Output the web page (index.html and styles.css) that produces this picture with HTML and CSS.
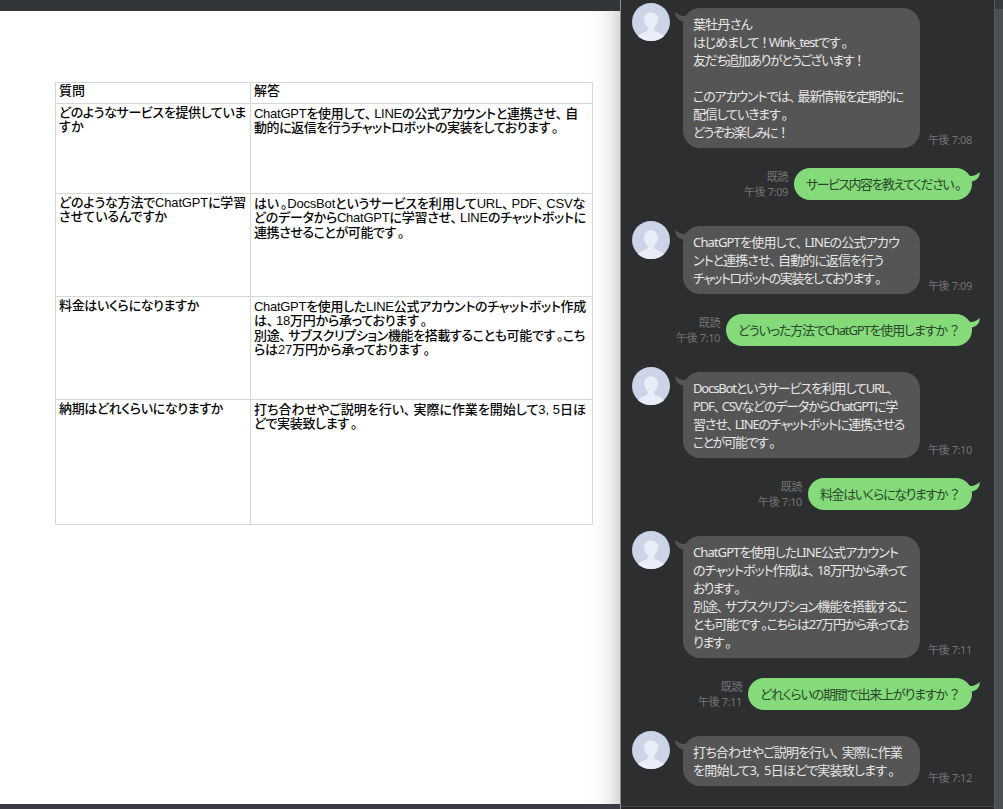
FILE: index.html
```html
<!DOCTYPE html>
<html lang="ja">
<head>
  <meta charset="UTF-8">
  <meta name="viewport" content="width=device-width, initial-scale=1.0">
  <title>ChatGPT × LINE</title>
  <link rel="stylesheet" href="styles.css">
</head>
<body>
  <svg class="defs" width="0" height="0">
    <symbol id="avatar" viewBox="0 0 38 38">
      <circle cx="19" cy="19" r="19" fill="#cdd4e8"/>
      <path d="M19 9.200c-4 0-6.900 3-6.900 7.200 0 3.500 1.500 6.200 3.700 7.900v2.200c0 1.200-1.200 1.800-3 2.500-2.800 1-5.300 2.300-6.900 4.200A19 19 0 0 0 19 38a19 19 0 0 0 13.100-4.800c-1.600-1.900-4.100-3.200-6.900-4.200-1.800-.7-3-1.300-3-2.500v-2.200c2.200-1.700 3.700-4.400 3.700-7.900 0-4.200-2.900-7.200-6.900-7.200z" fill="#e9edf7"/>
    </symbol>
    <symbol id="tail" viewBox="0 0 18 14">
      <path d="M0 1L5 3.200C9 4.800 14 3.800 17.600 0C18.300 5 14.500 8.400 9.500 9.600L4 14Z"/>
    </symbol>
  </svg>

  <div class="screen">
    <main class="doc">
      <div class="paper">
        <table class="faq">
          <tr class="head">
            <td><span class="line" data-width="26">質問</span></td>
            <td><span class="line" data-width="26">解答</span></td>
          </tr>
          <tr class="r1">
            <td><span class="line" data-width="187">どのようなサービスを提供していま</span><span class="line" data-width="25">すか</span></td>
            <td><span class="line" data-width="324">ChatGPTを使用して、LINEの公式アカウントと連携させ、自</span><span class="line" data-width="304">動的に返信を行うチャットロボットの実装をしております。</span></td>
          </tr>
          <tr class="r2">
            <td><span class="line" data-width="187">どのような方法でChatGPTに学習</span><span class="line" data-width="108">させているんですか</span></td>
            <td><span class="line" data-width="331">はい。DocsBotというサービスを利用してURL、PDF、CSVな</span><span class="line" data-width="332">どのデータからChatGPTに学習させ、LINEのチャットボットに</span><span class="line" data-width="150">連携させることが可能です。</span></td>
          </tr>
          <tr class="r3">
            <td><span class="line" data-width="140">料金はいくらになりますか</span></td>
            <td><span class="line" data-width="332">ChatGPTを使用したLINE公式アカウントのチャットボット作成</span><span class="line" data-width="173">は、18万円から承っております。</span><span class="line" data-width="331">別途、サブスクリプション機能を搭載することも可能です。こち</span><span class="line" data-width="176">らは27万円から承っております。</span></td>
          </tr>
          <tr class="r4">
            <td><span class="line" data-width="164">納期はどれくらいになりますか</span></td>
            <td><span class="line" data-width="332">打ち合わせやご説明を行い、実際に作業を開始して3, 5日ほ</span><span class="line" data-width="103">どで実装致します。</span></td>
          </tr>
        </table>
      </div>
    </main>

    <section class="chat">
      <div class="msg bot">
        <svg class="avatar"><use href="#avatar"/></svg>
        <div class="bubble">
          <svg class="tail"><use href="#tail"/></svg>
          <span class="line" data-width="59">葉牡丹さん</span>
          <span class="line" data-width="154">はじめまして！Wink_testです。</span>
          <span class="line" data-width="170">友だち追加ありがとうございます！</span>
          <span class="line">&nbsp;</span>
          <span class="line" data-width="210">このアカウントでは、最新情報を定期的に</span>
          <span class="line" data-width="94">配信していきます。</span>
          <span class="line" data-width="94">どうぞお楽しみに！</span>
        </div>
        <div class="meta"><span>午後 7:08</span></div>
      </div>

      <div class="msg user">
        <div class="meta"><span>既読</span><span>午後 7:09</span></div>
        <div class="bubble">
          <svg class="tail"><use href="#tail"/></svg>
          <span class="line" data-width="154">サービス内容を教えてください。</span>
        </div>
      </div>

      <div class="msg bot">
        <svg class="avatar"><use href="#avatar"/></svg>
        <div class="bubble">
          <svg class="tail"><use href="#tail"/></svg>
          <span class="line" data-width="206">ChatGPTを使用して、LINEの公式アカウ</span>
          <span class="line" data-width="190">ントと連携させ、自動的に返信を行う</span>
          <span class="line" data-width="187">チャットロボットの実装をしております。</span>
        </div>
        <div class="meta"><span>午後 7:09</span></div>
      </div>

      <div class="msg user">
        <div class="meta"><span>既読</span><span>午後 7:10</span></div>
        <div class="bubble">
          <svg class="tail"><use href="#tail"/></svg>
          <span class="line" data-width="222">どういった方法でChatGPTを使用しますか？</span>
        </div>
      </div>

      <div class="msg bot">
        <svg class="avatar"><use href="#avatar"/></svg>
        <div class="bubble">
          <svg class="tail"><use href="#tail"/></svg>
          <span class="line" data-width="202">DocsBotというサービスを利用してURL、</span>
          <span class="line" data-width="204">PDF、CSVなどのデータからChatGPTに学</span>
          <span class="line" data-width="211">習させ、LINEのチャットボットに連携させる</span>
          <span class="line" data-width="81">ことが可能です。</span>
        </div>
        <div class="meta"><span>午後 7:10</span></div>
      </div>

      <div class="msg user">
        <div class="meta"><span>既読</span><span>午後 7:10</span></div>
        <div class="bubble">
          <svg class="tail"><use href="#tail"/></svg>
          <span class="line" data-width="140">料金はいくらになりますか？</span>
        </div>
      </div>

      <div class="msg bot">
        <svg class="avatar"><use href="#avatar"/></svg>
        <div class="bubble">
          <svg class="tail"><use href="#tail"/></svg>
          <span class="line" data-width="205">ChatGPTを使用したLINE公式アカウント</span>
          <span class="line" data-width="214">のチャットボット作成は、18万円から承って</span>
          <span class="line" data-width="46">おります。</span>
          <span class="line" data-width="214">別途、サブスクリプション機能を搭載するこ</span>
          <span class="line" data-width="215">とも可能です。こちらは27万円から承ってお</span>
          <span class="line" data-width="37">ります。</span>
        </div>
        <div class="meta"><span>午後 7:11</span></div>
      </div>

      <div class="msg user">
        <div class="meta"><span>既読</span><span>午後 7:11</span></div>
        <div class="bubble">
          <svg class="tail"><use href="#tail"/></svg>
          <span class="line" data-width="200">どれくらいの期間で出来上がりますか？</span>
        </div>
      </div>

      <div class="msg bot">
        <svg class="avatar"><use href="#avatar"/></svg>
        <div class="bubble">
          <svg class="tail"><use href="#tail"/></svg>
          <span class="line" data-width="209">打ち合わせやご説明を行い、実際に作業</span>
          <span class="line" data-width="201">を開始して3,&nbsp; 5日ほどで実装致します。</span>
        </div>
        <div class="meta"><span>午後 7:12</span></div>
      </div>
    </section>

    <aside class="edge"></aside>
  </div>

  <script src="script.js"></script>
</body>
</html>
```

FILE: styles.css
```css
* {
  box-sizing: border-box;
}

body {
  margin: 0;
  background: #323639;
  overflow: hidden;
}

.defs {
  display: block;
}

.screen {
  display: flex;
  width: 1003px;
  height: 809px;
}

.line {
  display: block;
  width: max-content;
  white-space: nowrap;
  font-feature-settings: "palt";
}

/* punctuation keeps part of its full-width space */
.comma {
  margin-right: 3px;
}

.stop {
  margin-left: 2px;
}

.mark {
  margin: 0 2px 0 3px;
}

/* document */
.doc {
  width: 620px;
  padding: 11px 0 5px;
  background: linear-gradient(#323639 0 50%, #3b3c43 50%);
}

.paper {
  height: 793px;
  padding: 71px 0 0 55px;
  background: linear-gradient(to right, #fff 585px, #fbfbfb 598px, #efefef 610px, #d6d6d6 620px);
}

.faq {
  width: 538px;
  border-collapse: collapse;
  table-layout: fixed;
  font-family: "Liberation Sans", "Noto Sans CJK JP", sans-serif;
  font-size: 13px;
  font-weight: 500;
  line-height: 14.3px;
  color: #080808;
}

.faq td {
  padding: 3px 3px 0;
  border: 1px solid #d5d8d8;
  vertical-align: top;
}

.faq td:first-child {
  width: 195px;
  padding-top: 2px;
  line-height: 13.5px;
}

.head {
  height: 21px;
}

.faq .head td {
  padding-top: 1px;
  line-height: 14px;
}

.r1 {
  height: 90px;
}

.r2,
.r3 {
  height: 103px;
}

.r4 {
  height: 125px;
}

/* chat */
.chat {
  width: 375px;
  padding: 3px 22px 0 10px;
  background: linear-gradient(#2c2e30 806px, #44464a 806px 807px, #2a2628 807px);
  border-left: 1px solid #8b8d8e;
  border-right: 1px solid #54585a;
  font-family: "Noto Sans", "Noto Sans CJK JP", sans-serif;
  font-size: 13px;
  line-height: 18px;
}

.msg {
  display: flex;
}

.bot {
  align-items: flex-start;
  margin-left: 1px;
  margin-bottom: 20px;
}

.user {
  justify-content: flex-end;
  align-items: center;
  gap: 6px;
  margin-bottom: 21px;
}

.avatar {
  flex: none;
  width: 38px;
  height: 38px;
}

.bubble {
  position: relative;
  flex: none;
}

.bot .bubble {
  width: 237px;
  margin: 5px 8px 0 13px;
  padding: 7px 10px;
  border-radius: 17px;
  background: #555;
  color: #e6e6e6;
}

.user .bubble {
  padding: 7px 12px;
  border-radius: 16px;
  background: #85db79;
  color: #2a472c;
}

.tail {
  position: absolute;
  top: 4px;
  width: 18px;
  height: 14px;
}

.bot .tail {
  left: -8px;
  fill: #555;
  transform: scaleX(-1);
}

.user .tail {
  right: -8px;
  fill: #85db79;
}

.meta {
  display: flex;
  flex-direction: column;
  font-size: 11px;
  line-height: 15px;
  letter-spacing: -0.4px;
  color: #727476;
  white-space: nowrap;
}

.bot .meta {
  align-self: flex-end;
  padding-bottom: 1px;
}

.user .meta {
  align-items: flex-end;
}

/* strip of the window behind */
.edge {
  width: 8px;
  background: linear-gradient(#373b3d 0 9px, #4a4f53 9px);
}
```

FILE: script.js
```js
const punctuation = { "、": "comma", "。": "stop", "！": "mark", "？": "mark" };

// set each line to its own measure
document.querySelectorAll(".line[data-width]").forEach((line) => {
  line.innerHTML = line.innerHTML.replace(/[、。！？]/g, (c) => `<span class="${punctuation[c]}">${c}</span>`);

  const natural = line.getBoundingClientRect().width;
  const target = Number(line.dataset.width);
  const count = line.textContent.length;
  line.style.letterSpacing = (target - natural) / count + "px";
});
```
